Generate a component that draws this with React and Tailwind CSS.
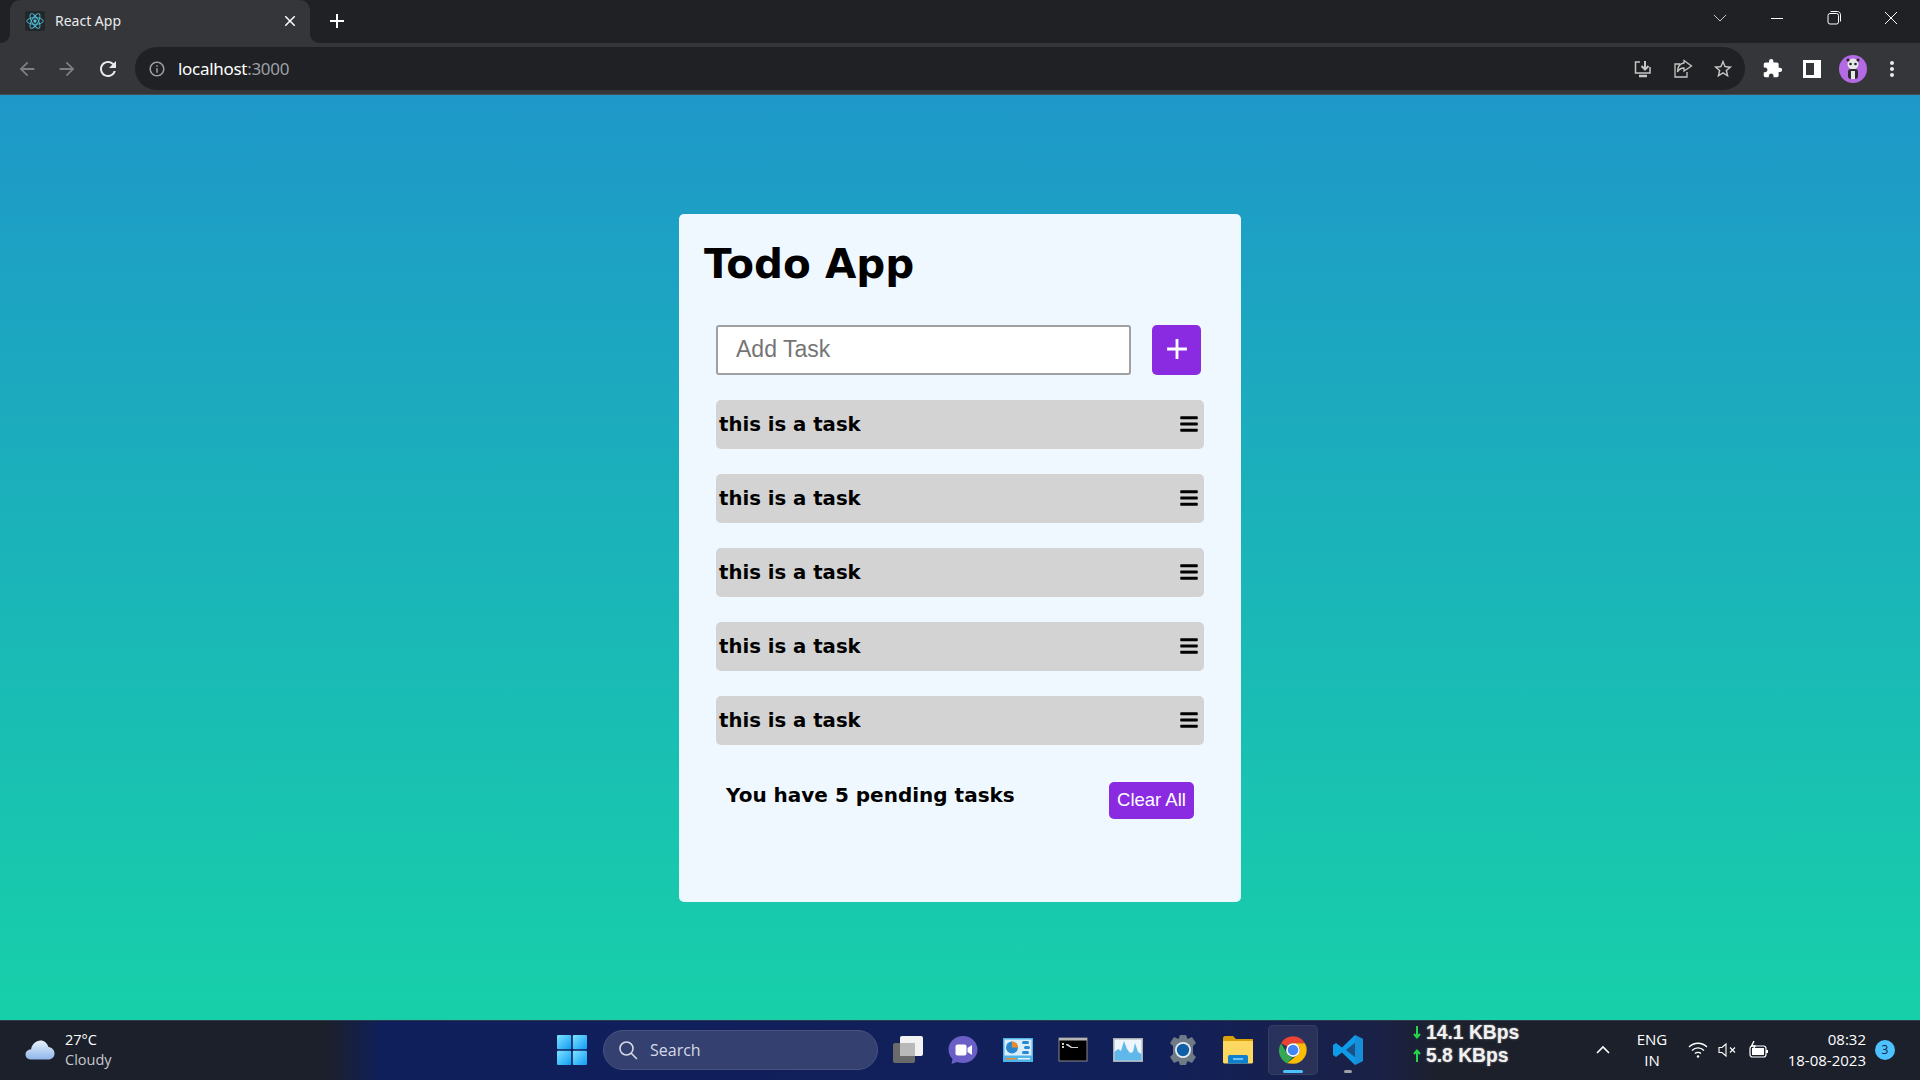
import { FaBars } from 'react-icons/fa';
import {
  MdArrowBack,
  MdArrowForward,
  MdRefresh,
  MdInfoOutline,
  MdStarBorder,
  MdExtension,
  MdMoreVert,
  MdClose,
  MdAdd,
} from 'react-icons/md';

const tasks = ['this is a task', 'this is a task', 'this is a task', 'this is a task', 'this is a task'];

function ReactLogo() {
  return (
    <div className="w-5 h-5 bg-[#23272a] rounded-[2px] flex items-center justify-center">
      <svg width="18" height="18" viewBox="0 0 24 24" fill="none" stroke="#4fc3dc" strokeWidth="1.2">
        <circle cx="12" cy="12" r="2.2" fill="#4fc3dc" stroke="none" />
        <ellipse cx="12" cy="12" rx="11" ry="4.4" />
        <ellipse cx="12" cy="12" rx="11" ry="4.4" transform="rotate(60 12 12)" />
        <ellipse cx="12" cy="12" rx="11" ry="4.4" transform="rotate(120 12 12)" />
      </svg>
    </div>
  );
}

function BrowserChrome() {
  return (
    <div className="shrink-0 font-['Open_Sans',sans-serif]">
      {/* Tab strip */}
      <div className="h-[43px] bg-[#202124] flex items-end text-white">
        <div className="w-[10px]" />
        <div className="relative w-[300px] h-[43px] bg-[#35363a] rounded-t-[10px] flex items-center pl-[15px] pr-[11px] pb-[2px]">
          <svg className="absolute left-[-10px] bottom-0" width="10" height="10" viewBox="0 0 10 10">
            <path d="M10 0V10H0C6 10 10 6 10 0Z" fill="#35363a" />
          </svg>
          <svg className="absolute right-[-10px] bottom-0" width="10" height="10" viewBox="0 0 10 10">
            <path d="M0 0V10H10C4 10 0 6 0 0Z" fill="#35363a" />
          </svg>
          <ReactLogo />
          <span className="ml-[10px] text-[14px] font-['Noto_Sans',sans-serif] text-[#e8eaed] flex-1">React App</span>
          <MdClose size={18} className="text-white" />
        </div>
        <div className="w-[15px]" />
        <div className="h-[43px] flex items-center pb-[2px]">
          <MdAdd size={24} className="text-white" />
        </div>
        <div className="flex-1" />
        <div className="h-[43px] flex items-start pt-[10px] text-[#e8eaed]">
          <svg width="16" height="16" viewBox="0 0 16 16" fill="none" stroke="#c4c7c5" strokeWidth="1" className="mr-[41px]">
            <path d="M2 5L8 11L14 5" />
          </svg>
          <svg width="16" height="16" viewBox="0 0 16 16" fill="none" stroke="white" strokeWidth="1" className="mr-[41px]">
            <path d="M2 8.5H14" />
          </svg>
          <svg width="16" height="16" viewBox="0 0 16 16" fill="none" stroke="white" strokeWidth="1" className="mr-[41px]">
            <rect x="2" y="3.5" width="10.5" height="10.5" rx="2" />
            <path d="M4.5 1.5H11.5C13 1.5 14.5 3 14.5 4.5V11.5" />
          </svg>
          <svg width="16" height="16" viewBox="0 0 16 16" fill="none" stroke="white" strokeWidth="1" className="mr-[21px]">
            <path d="M2 2L14 14M14 2L2 14" />
          </svg>
        </div>
      </div>
      {/* Toolbar */}
      <div className="h-[52px] bg-[#35363a] border-b border-[#4a4c50] flex items-center">
        <MdArrowBack size={22} className="text-[#7d7f83] ml-[16px]" />
        <MdArrowForward size={22} className="text-[#7d7f83] ml-[18px]" />
        <MdRefresh size={24} className="text-[#e8eaed] ml-[18px]" />
        <div className="ml-[15px] w-[1610px] h-[43px] bg-[#202124] rounded-full flex items-center">
          <MdInfoOutline size={18} className="text-[#9aa0a6] ml-[13px]" />
          <span className="ml-[12px] text-[17px] text-white font-['Noto_Sans',sans-serif] tracking-[-0.3px]">
            localhost<span className="text-[#9aa0a6]">:3000</span>
          </span>
          <div className="flex-1" />
          <svg width="20" height="20" viewBox="0 0 20 20" fill="none" stroke="#c4c7c5" strokeWidth="1.5" className="mr-[20px]">
            <path d="M7 3H2.5V14H17V8" />
            <path d="M12 2V10M8.5 7L12 10.5L15.5 7" strokeWidth="2" />
            <path d="M6 17H14" strokeWidth="2.5" />
          </svg>
          <svg width="20" height="20" viewBox="0 0 20 20" fill="none" stroke="#c4c7c5" strokeWidth="1.3" className="mr-[19px]">
            <path d="M7 5H2V18H14V13" />
            <path d="M11 4V1.5L18.5 7L11 12V9C8 9 6 10 4.5 13C4.5 8 7 4.5 11 4Z" />
          </svg>
          <MdStarBorder size={22} className="text-[#c4c7c5] mr-[11px]" />
        </div>
        <MdExtension size={21} className="text-white ml-[17px]" />
        <svg width="18" height="18" viewBox="0 0 18 18" className="ml-[20px]">
          <path d="M0 0H18V18H0Z M3 3V15H11V3Z" fill="white" fillRule="evenodd" />
        </svg>
        <div className="ml-[18px] w-[28px] h-[28px] rounded-full bg-[#b36ae2] flex items-center justify-center">
          <svg width="18" height="22" viewBox="0 0 18 22">
            <circle cx="9" cy="6" r="5.5" fill="#e8e8e8" />
            <rect x="4" y="11" width="10" height="10" rx="3" fill="#2b2b2b" />
            <rect x="7" y="13" width="4" height="8" fill="#e8e8e8" />
            <circle cx="6.5" cy="6" r="1.3" fill="#222" />
            <circle cx="11.5" cy="6" r="1.3" fill="#222" />
            <circle cx="4" cy="2" r="1.5" fill="#222" />
            <circle cx="14" cy="2" r="1.5" fill="#222" />
          </svg>
        </div>
        <MdMoreVert size={24} className="text-[#e8eaed] ml-[13px]" />
      </div>
    </div>
  );
}

function TodoCard() {
  return (
    <div className="w-[562px] h-[688px] bg-[#f0f8ff] rounded-[5px] pt-[25px] px-[25px] font-['DejaVu_Sans',sans-serif] text-black">
      <h1 className="text-[40.5px] leading-[50px] font-bold">Todo App</h1>
      <div className="px-[12px] mt-[36px]">
        <div className="flex items-center">
          <input
            readOnly
            placeholder="Add Task"
            className="w-[415px] h-[50px] bg-white border-2 border-[#a0a0a0] rounded-[3px] pl-[18px] text-[23px] font-['Liberation_Sans',sans-serif] placeholder:text-[#757575] outline-none"
          />
          <button className="ml-[21px] w-[49px] h-[50px] bg-[#8a2be2] rounded-[5px] flex items-center justify-center text-white pb-[2px]">
            <MdAdd size={34} />
          </button>
        </div>
        <ul className="mt-[25px] flex flex-col gap-[25px]">
          {tasks.map((task, idx) => (
            <li key={idx} className="h-[49px] bg-[#d3d3d3] rounded-[5px] flex items-center justify-between pl-[3px] pr-[5px]">
              <span className="text-[19.7px] font-bold pt-[2px]">{task}</span>
              <FaBars size={20} className="mb-[1px]" />
            </li>
          ))}
        </ul>
        <div className="mt-[37px] flex items-start justify-between pl-[10px] pr-[10px]">
          <span className="mt-[-2px] text-[20px] font-bold">You have 5 pending tasks</span>
          <button className="w-[85px] h-[37px] bg-[#8a2be2] rounded-[5px] text-white text-[18.5px] font-['Liberation_Sans',sans-serif]">
            Clear All
          </button>
        </div>
      </div>
    </div>
  );
}

function WindowsLogo() {
  return (
    <svg width="30" height="30" viewBox="0 0 30 30">
      <defs>
        <linearGradient id="win" x1="0" y1="0" x2="1" y2="1">
          <stop offset="0" stopColor="#7ee4ff" />
          <stop offset="1" stopColor="#0f9bf5" />
        </linearGradient>
      </defs>
      <rect x="0" y="0" width="14.2" height="14.2" rx="1" fill="url(#win)" />
      <rect x="15.8" y="0" width="14.2" height="14.2" rx="1" fill="url(#win)" />
      <rect x="0" y="15.8" width="14.2" height="14.2" rx="1" fill="url(#win)" />
      <rect x="15.8" y="15.8" width="14.2" height="14.2" rx="1" fill="url(#win)" />
    </svg>
  );
}

function TaskView() {
  return (
    <svg width="30" height="30" viewBox="0 0 30 30">
      <rect x="0" y="8" width="22" height="20" rx="2" fill="#6a6a6a" />
      <rect x="7" y="1" width="23" height="20" rx="2" fill="#f2f2f2" />
      <rect x="7" y="8" width="15" height="13" fill="#b9b9b9" />
    </svg>
  );
}

function MeetIcon() {
  return (
    <svg width="30" height="30" viewBox="0 0 30 30">
      <path d="M15 1C23 1 29.5 7 29.5 14.5C29.5 22 23 28 15 28C13 28 11 27.6 9 27L3.5 29L4.5 24C2 21.5 0.5 18 0.5 14.5C0.5 7 7 1 15 1Z" fill="#6b5fc7" />
      <rect x="7.5" y="9.5" width="11" height="11" rx="2" fill="white" />
      <path d="M19.5 13L24 10V20L19.5 17Z" fill="white" />
    </svg>
  );
}

function ResourceIcon() {
  return (
    <svg width="30" height="30" viewBox="0 0 30 30">
      <rect x="0" y="3" width="30" height="24" fill="#4fb4ea" />
      <rect x="1.5" y="4.5" width="27" height="16" fill="#d9eefa" />
      <circle cx="9" cy="12.5" r="6" fill="#2b88cf" />
      <path d="M9 12.5V6.5A6 6 0 0 1 15 12.5Z" fill="#f08a24" />
      <rect x="19" y="6" width="7" height="3" rx="1.5" fill="#2b88cf" />
      <rect x="21" y="11" width="6" height="3" rx="1.5" fill="#2b88cf" />
      <rect x="19" y="16" width="7" height="3" rx="1.5" fill="#2b88cf" />
      <rect x="3" y="23" width="10" height="1.5" fill="#f08a24" />
      <rect x="15" y="23" width="12" height="1.5" fill="#e6f4fc" />
    </svg>
  );
}

function CmdIcon() {
  return (
    <svg width="30" height="30" viewBox="0 0 30 30">
      <rect x="1" y="3" width="28" height="23" fill="#000" stroke="#8a8a8a" strokeWidth="1" />
      <rect x="1" y="3" width="28" height="2.5" fill="#b5b5b5" />
      <path d="M4 8H6V10H4ZM4 11H6V13H4ZM8 9H10L14 12H20V13H13L8 10Z" fill="#cfcfcf" />
    </svg>
  );
}

function PerfIcon() {
  return (
    <svg width="30" height="30" viewBox="0 0 30 30">
      <rect x="0" y="3" width="30" height="24" fill="#a9b0b5" />
      <rect x="1.5" y="4.5" width="27" height="21" fill="#eef6fb" />
      <path d="M1.5 25.5V17L5 14L8 16L11 6L14 14L17 18L20 17L22 8L25 17L28.5 19V25.5Z" fill="#5fb7ea" />
    </svg>
  );
}

function GearIcon() {
  return (
    <svg width="30" height="30" viewBox="0 0 30 30">
      <path
        d="M12 0H18L19.5 4L24 2L28 8L25 11V19L28 22L24 28L19.5 26L18 30H12L10.5 26L6 28L2 22L5 19V11L2 8L6 2L10.5 4Z"
        fill="#6e7a85"
        strokeLinejoin="round"
      />
      <circle cx="15" cy="15" r="8" fill="#e9edf0" />
      <circle cx="15" cy="15" r="6.2" fill="#0f5fa8" />
    </svg>
  );
}

function ExplorerIcon() {
  return (
    <svg width="30" height="30" viewBox="0 0 30 30">
      <path d="M0 3C0 2 1 1 2 1H10L13 4H30V12H0Z" fill="#d9a20a" />
      <path d="M0 6H30V27C30 28 29 28.5 28 28.5H2C1 28.5 0 28 0 27Z" fill="#fcd860" />
      <path d="M5 28.5V22C5 20.5 6 20 7 20H23C24 20 25 20.5 25 22V28.5Z" fill="#0f7fd0" />
      <rect x="10" y="23" width="10" height="2" fill="#6fc3f2" />
    </svg>
  );
}

function ChromeIcon() {
  return (
    <svg width="30" height="30" viewBox="0 0 48 48">
      <path d="M24 2A22 22 0 0 1 43 13H24A11 11 0 0 0 14.5 18.5L5 13A22 22 0 0 1 24 2Z" fill="#ea4335" />
      <path d="M5 13L14.5 29.5A11 11 0 0 0 24 35L14.5 45A22 22 0 0 1 5 13Z" fill="#34a853" />
      <path d="M43 13A22 22 0 0 1 24 46L14.5 45L14.5 45L33.5 29.5A11 11 0 0 0 33.5 18.5L24 13Z" fill="#fbbc04" />
      <circle cx="24" cy="24" r="11" fill="white" />
      <circle cx="24" cy="24" r="8.5" fill="#4285f4" />
    </svg>
  );
}

function VsCodeIcon() {
  return (
    <svg width="30" height="30" viewBox="0 0 30 30">
      <path d="M22 0L30 4V26L22 30L9 17.5L3 22L0 20V10L3 8L9 12.5Z M22 8L13 15L22 22Z" fill="#0e9ce8" fillRule="evenodd" />
      <path d="M22 0L30 4V26L22 30Z M22 8L22 22L13 15Z" fill="#1f7fc8" fillRule="evenodd" opacity="0.5" />
    </svg>
  );
}

function WeatherCloud() {
  return (
    <svg width="30" height="22" viewBox="0 0 30 22">
      <defs>
        <linearGradient id="cloud" x1="0" y1="0" x2="0" y2="1">
          <stop offset="0" stopColor="#e8f1fd" />
          <stop offset="1" stopColor="#8fb6ea" />
        </linearGradient>
      </defs>
      <path d="M7 20.5C3 20.5 0.5 18.5 0.5 15.5C0.5 12.5 3 10.5 6 10.5C7 5 11 1.5 15.5 1.5C19.5 1.5 22 4 23.5 8C27 8.5 29.5 11 29.5 14.5C29.5 18 27 20.5 23 20.5Z" fill="url(#cloud)" />
    </svg>
  );
}

function SpeedArrow({ up }) {
  return (
    <svg width="8" height="13" viewBox="0 0 8 13" fill="none" stroke="#22d64a" strokeWidth="2" className="mr-[5px]">
      {up ? <path d="M4 13V2M1 5L4 1.5L7 5" /> : <path d="M4 0V11M1 8L4 11.5L7 8" />}
    </svg>
  );
}

function Taskbar() {
  return (
    <div className="h-[60px] shrink-0 pb-[2px] border-t border-[#2f3a4a] bg-[linear-gradient(to_right,#1c202b_0%,#1c202b_17%,#0f1f5c_20%,#12205a_60%,#1a2145_72%,#1c202b_75%,#1c202b_100%)] flex items-center font-['Open_Sans',sans-serif] text-white">
      {/* Weather */}
      <div className="w-[557px] shrink-0 flex items-center pl-[25px]">
        <WeatherCloud />
        <div className="ml-[10px] text-[14.5px] leading-[20px]">
          <div>27°C</div>
          <div className="text-[#c6c8cc]">Cloudy</div>
        </div>
      </div>

      {/* Pinned apps */}
      <WindowsLogo />
      <div className="ml-[16px] w-[275px] h-[40px] rounded-full bg-[#344070] border border-[#48527e] flex items-center pl-[14px]">
        <svg width="20" height="20" viewBox="0 0 20 20" fill="none" stroke="#d5d9e6" strokeWidth="1.6">
          <circle cx="8.5" cy="8.5" r="6.5" />
          <path d="M13.5 13.5L18.5 18.5" strokeLinecap="round" />
        </svg>
        <span className="ml-[12px] text-[16px] text-[#d5d9e6]">Search</span>
      </div>
      <div className="ml-[15px] flex items-center gap-[25px]">
        <TaskView />
        <MeetIcon />
        <ResourceIcon />
        <CmdIcon />
        <PerfIcon />
        <GearIcon />
        <ExplorerIcon />
        <div className="relative w-[30px] h-[30px]">
          <div className="absolute left-[-10px] top-[-10px] w-[50px] h-[50px] rounded-[5px] bg-[#ffffff14] border border-[#ffffff10]" />
          <div className="absolute left-0 top-0">
            <ChromeIcon />
          </div>
          <div className="absolute left-[5px] top-[35px] w-[20px] h-[3px] rounded-full bg-[#4cc2ff]" />
        </div>
        <div className="relative w-[30px] h-[30px]">
          <VsCodeIcon />
          <div className="absolute left-[11px] top-[35px] w-[8px] h-[3px] rounded-full bg-[#9aa0a6]" />
        </div>
      </div>

      {/* Net speed */}
      <div className="ml-[50px] w-[132px] font-['Liberation_Sans',sans-serif] font-bold text-[19.3px] leading-[23px] text-[#f1f1f1] [text-shadow:0_0_2px_#9a9a9a] mb-[11px]">
        <div className="flex items-center">
          <SpeedArrow />
          14.1 KBps
        </div>
        <div className="flex items-center">
          <SpeedArrow up />
          5.8 KBps
        </div>
      </div>

      {/* System tray */}
      <svg width="16" height="10" viewBox="0 0 16 10" fill="none" stroke="white" strokeWidth="1.6" className="ml-[50px]">
        <path d="M2 8L8 2L14 8" />
      </svg>
      <div className="ml-[23px] w-[36px] text-center text-[15px] leading-[21px]">
        <div>ENG</div>
        <div>IN</div>
      </div>
      <svg width="20" height="18" viewBox="0 0 20 18" fill="none" stroke="white" strokeWidth="1.4" className="ml-[18px]">
        <path d="M1 6C6 1 14 1 19 6M4 9.5C7.5 6 12.5 6 16 9.5M7 12.5C8.5 11 11.5 11 13 12.5" />
        <circle cx="10" cy="15.5" r="1.2" fill="white" stroke="none" />
      </svg>
      <svg width="20" height="16" viewBox="0 0 20 16" fill="none" stroke="white" strokeWidth="1.1" className="ml-[10px]">
        <path d="M1 5.5H4L8 2V14L4 10.5H1Z" />
        <path d="M12 5.5L17 10.5M17 5.5L12 10.5" />
      </svg>
      <svg width="20" height="18" viewBox="0 0 20 18" fill="none" stroke="white" strokeWidth="1.2" className="ml-[11px]">
        <rect x="1" y="5" width="16" height="11" rx="2.5" />
        <rect x="3" y="7" width="12" height="7" fill="white" stroke="none" />
        <path d="M18 9V12" strokeWidth="2" />
        <path d="M5 0L2.5 5H6L4 9" strokeWidth="1.4" />
      </svg>
      <div className="ml-[12px] w-[85px] text-right text-[15px] leading-[21px]">
        <div>08:32</div>
        <div>18-08-2023</div>
      </div>
      <div className="ml-[9px] w-[20px] h-[20px] rounded-full bg-[#4cc2ff] text-[#10203a] text-[12px] flex items-center justify-center">
        3
      </div>
    </div>
  );
}

export default function App() {
  return (
    <div className="w-[1920px] h-[1080px] flex flex-col overflow-hidden">
      <BrowserChrome />
      <main className="flex-1 flex items-center justify-center bg-[linear-gradient(to_bottom,#1e98c9,#17d0a9)]">
        <TodoCard />
      </main>
      <Taskbar />
    </div>
  );
}
